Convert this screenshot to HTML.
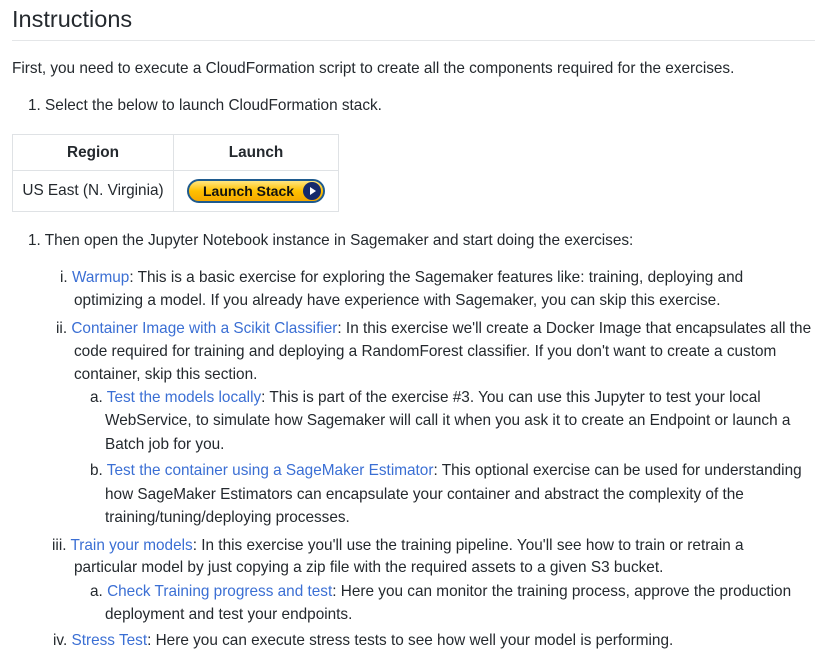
<!DOCTYPE html>
<html><head><meta charset="utf-8"><style>
body{margin:0;width:831px;height:660px;background:#fff;position:relative;overflow:hidden;font-family:"Liberation Sans",sans-serif;color:#24292e;}
.l{position:absolute;white-space:nowrap;font-size:15.35px;line-height:20px;}
a{color:#3b6fd4;text-decoration:none}
h1{position:absolute;left:12px;top:4px;margin:0;font-size:23.5px;font-weight:normal;line-height:30px;}
.hr{position:absolute;left:12px;top:40px;width:803px;height:1px;background:#e4e6e8}
table{position:absolute;left:12px;top:134px;border-collapse:collapse;font-size:15.35px}
td,th{border:1px solid #dfe2e5;text-align:center;padding:0}
th{height:35px;font-weight:bold}
td{height:40px}
.btn{display:inline-block;position:relative;width:138px;height:24px;border:2px solid #1e5a8e;border-radius:12px;background:linear-gradient(#ffe680,#ffc000 50%,#f5a800);box-sizing:border-box;font-weight:bold;font-size:14px;line-height:20px;text-align:left;padding-left:14px;color:#111;vertical-align:middle}
.btn i{position:absolute;right:2px;top:1px;width:18px;height:18px;border-radius:50%;background:#152a6b}
.btn i:after{content:"";position:absolute;left:7px;top:5px;border-left:6px solid #fff;border-top:4px solid transparent;border-bottom:4px solid transparent}
</style></head><body>
<h1>Instructions</h1><div class="hr"></div>
<div class="l" style="left:12px;top:59px">First, you need to execute a CloudFormation script to create all the components required for the exercises.</div>
<div class="l" style="left:28px;top:96px">1. Select the below to launch CloudFormation stack.</div>
<table><tr><th style="width:160px">Region</th><th style="width:164px">Launch</th></tr>
<tr><td>US East (N. Virginia)</td><td><span class="btn">Launch Stack<i></i></span></td></tr></table>
<div class="l" style="left:28px;top:231px">1. Then open the Jupyter Notebook instance in Sagemaker and start doing the exercises:</div>
<div class="l" style="left:60px;top:268px">i. <a>Warmup</a>: This is a basic exercise for exploring the Sagemaker features like: training, deploying and</div>
<div class="l" style="left:74px;top:291px">optimizing a model. If you already have experience with Sagemaker, you can skip this exercise.</div>
<div class="l" style="left:56px;top:319px">ii. <a>Container Image with a Scikit Classifier</a>: In this exercise we'll create a Docker Image that encapsulates all the</div>
<div class="l" style="left:74px;top:342px">code required for training and deploying a RandomForest classifier. If you don't want to create a custom</div>
<div class="l" style="left:74px;top:365px">container, skip this section.</div>
<div class="l" style="left:90px;top:388px">a. <a>Test the models locally</a>: This is part of the exercise #3. You can use this Jupyter to test your local</div>
<div class="l" style="left:105px;top:411px">WebService, to simulate how Sagemaker will call it when you ask it to create an Endpoint or launch a</div>
<div class="l" style="left:105px;top:435px">Batch job for you.</div>
<div class="l" style="left:90px;top:461px">b. <a>Test the container using a SageMaker Estimator</a>: This optional exercise can be used for understanding</div>
<div class="l" style="left:105px;top:485px">how SageMaker Estimators can encapsulate your container and abstract the complexity of the</div>
<div class="l" style="left:105px;top:508px">training/tuning/deploying processes.</div>
<div class="l" style="left:52px;top:536px">iii. <a>Train your models</a>: In this exercise you'll use the training pipeline. You'll see how to train or retrain a</div>
<div class="l" style="left:74px;top:558px">particular model by just copying a zip file with the required assets to a given S3 bucket.</div>
<div class="l" style="left:90px;top:582px">a. <a>Check Training progress and test</a>: Here you can monitor the training process, approve the production</div>
<div class="l" style="left:105px;top:605px">deployment and test your endpoints.</div>
<div class="l" style="left:53px;top:631px">iv. <a>Stress Test</a>: Here you can execute stress tests to see how well your model is performing.</div>
</body></html>
